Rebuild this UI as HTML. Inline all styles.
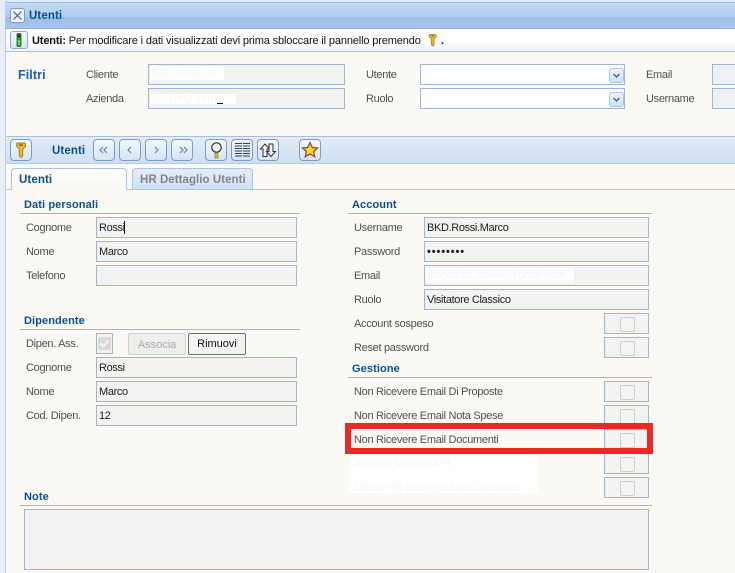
<!DOCTYPE html>
<html><head><meta charset="utf-8"><style>
html,body{margin:0;padding:0}
body{width:735px;height:573px;overflow:hidden;position:relative;background:#faf9f4;font-family:"Liberation Sans",sans-serif;font-size:11px;color:#444}
div,span,svg{position:absolute;box-sizing:border-box}
.l{white-space:nowrap;line-height:14px;height:14px;color:#4f4f4f;letter-spacing:-.3px;margin-top:1px}
.f{background:#f2f2f0;border:1px solid #9fb6d2;color:#222;line-height:21px;padding-left:2px;white-space:nowrap;letter-spacing:-.35px}
.e{background:#edf0f5;border:1px solid #9fb6d2}
.c{background:#fff;border:1px solid #9fb6d2}
.h{font-weight:bold;color:#0b4f8f;white-space:nowrap;line-height:14px;height:14px;font-size:11px;letter-spacing:.1px;margin-top:1px}
.r{height:1px;background:#9fb6d2}
.b{width:22px;height:22px;top:139px;border:1px solid #7f9bbd;border-radius:4px;background:linear-gradient(#f3f8fd,#d5e4f4)}
.cb{left:604px;width:45px;height:21px;background:#f2f2f0;border:1px solid #9fb6d2}
.cb:after{content:"";position:absolute;left:15px;top:3px;width:13px;height:13px;border:1px solid #cfcfcf;border-radius:2px;background:#f4f4f2}
.dd{left:188px;top:3px;width:15px;height:15px;border:1px solid #a9c3e4;border-radius:3px;background:linear-gradient(#eef5fc,#cfe0f3)}
</style></head><body>
<div style="left:0;top:0;width:5px;height:573px;background:#e9edf7"></div>
<div style="left:5px;top:0;width:1px;height:573px;background:#b9cdea"></div>
<div style="left:5px;top:0;width:730px;height:2px;background:#dfe9f6"></div>
<div style="left:5px;top:2px;width:730px;height:27px;border-top:1px solid #9dbde6;border-bottom:1px solid #8fb0dc;background:linear-gradient(#c0d8f4 0,#b2cef0 55%,#9fbde6 56%,#a9c5eb 100%)"></div>
<div style="left:10px;top:8px;width:15px;height:15px;border:1px solid #7f9bbd;border-radius:3px;background:#eff5fc"></div>
<svg style="left:10px;top:8px" width="15" height="15"><path d="M3.500 3.500L11.500 11.500M11.500 3.500L3.500 11.500" stroke="#3f5f95" stroke-width="1.200" fill="none"/></svg>
<div class="h" style="left:29px;top:8px;font-size:11.500px">Utenti</div>

<div style="left:6px;top:29px;width:729px;height:23px;background:linear-gradient(#fff 0,#fff 50%,#edf3fb 100%);border-bottom:1px solid #a9c3e4"></div>
<div style="left:10px;top:31px;width:18px;height:18px;border:1px solid #8fa7c4;border-radius:3px;background:linear-gradient(#f4f8fc,#dbe6f2)"></div>
<svg style="left:10px;top:31px" width="18" height="18"><rect x="7" y="2.500" width="4" height="13" rx="1" fill="#2f9b33" stroke="#1d5c20" stroke-width=".8"/><circle cx="9" cy="5" r="1.500" fill="#1c3d1f"/><rect x="7.800" y="9" width="2.400" height="5" fill="#58e05a"/></svg>
<div class="l" style="left:32px;top:33px;color:#111;letter-spacing:-.14px"><b>Utenti:</b> Per modificare i dati visualizzati devi prima sbloccare il pannello premendo</div>
<svg style="left:428px;top:33px" width="10" height="14"><path d="M1.500 1.500h6l.8 2.200-2.300 2.300v6l-1.500 1-1-1v-6L1 3.500z" fill="#f0b92a" stroke="#a8761a" stroke-width=".8"/><rect x="3.500" y="2.500" width="2.500" height="1" fill="#7a5a14"/></svg>
<div class="l" style="left:441px;top:33px;color:#111;font-weight:bold">.</div>

<div class="h" style="left:18px;top:67px;color:#1a5fb4;font-size:12.500px">Filtri</div>
<div class="l" style="left:86px;top:67px">Cliente</div>
<div class="l" style="left:86px;top:91px">Azienda</div>
<div class="f" style="left:148px;top:64px;width:197px;height:21px"></div>
<div class="f" style="left:148px;top:88px;width:197px;height:21px"></div>
<div style="left:150px;top:66px;width:74px;height:14px;background:#fff;color:#f5f5f5;line-height:14px;padding-left:1px;white-space:nowrap;overflow:hidden">B&amp;D Italia Srl</div>
<div style="left:150px;top:94px;width:86px;height:10px;background:#fff;color:#f5f5f5;line-height:10px;padding-left:1px;white-space:nowrap;overflow:hidden">BD BKD demo</div>
<div style="left:217px;top:103px;width:6px;height:1px;background:#222"></div>
<div class="l" style="left:366px;top:67px">Utente</div>
<div class="l" style="left:366px;top:91px">Ruolo</div>
<div class="c" style="left:420px;top:64px;width:205px;height:21px"><div class="dd"></div><svg style="left:191px;top:6px" width="9" height="9"><path d="M1.500 3L4.500 6L7.500 3" stroke="#2f5f9e" stroke-width="1.300" fill="none"/></svg></div>
<div class="c" style="left:420px;top:88px;width:205px;height:21px"><div class="dd"></div><svg style="left:191px;top:6px" width="9" height="9"><path d="M1.500 3L4.500 6L7.500 3" stroke="#2f5f9e" stroke-width="1.300" fill="none"/></svg></div>
<div class="l" style="left:646px;top:67px">Email</div>
<div class="l" style="left:646px;top:91px">Username</div>
<div class="e" style="left:712px;top:64px;width:30px;height:21px"></div>
<div class="e" style="left:712px;top:88px;width:30px;height:21px"></div>

<div style="left:6px;top:136px;width:729px;height:28px;border-top:1px solid #aac0de;background:linear-gradient(#e3ecf7,#cfdff2);border-bottom:1px solid #b5cbe8"></div>
<div class="b" style="left:10px"></div>
<svg style="left:10px;top:139px" width="22" height="22"><path d="M7 4h8l.8 3-3 3v6.500L11 18.500l-1.800-2V10L6.500 7z" fill="#f2b92a" stroke="#a8701a" stroke-width=".9"/><rect x="9" y="5.500" width="4" height="1.300" fill="#7a5a14"/></svg>
<div class="h" style="left:52px;top:143px;font-size:11.500px">Utenti</div>
<div class="b" style="left:93px"></div><div class="b" style="left:119px"></div><div class="b" style="left:145px"></div><div class="b" style="left:171px"></div>
<svg style="left:93px;top:139px" width="100" height="22" fill="none" stroke="#5f86b8" stroke-width="1.200"><path d="M10 8l-3 3 3 3M14 8l-3 3 3 3M38 8l-3 3 3 3M62 8l3 3-3 3M87 8l3 3-3 3M91 8l3 3-3 3"/></svg>
<div class="b" style="left:205px"></div><div class="b" style="left:231px"></div><div class="b" style="left:257px"></div><div class="b" style="left:299px"></div>
<svg style="left:205px;top:139px" width="22" height="22"><rect x="10" y="13" width="3" height="6" fill="#e8a92a" stroke="#8f6a1c" stroke-width=".6"/><circle cx="11.500" cy="8.500" r="4.700" fill="#eef2f4" stroke="#333" stroke-width="1.200"/></svg>
<svg style="left:231px;top:139px" width="22" height="22" fill="none" stroke="#2f3f55" stroke-width="1"><path d="M4 4.500h7M4 7h7M4 9.500h7M4 12h7M4 14.500h7M4 17h7M12 4.500h7M12 7h7M12 9.500h7M12 12h7M12 14.500h7M12 17h7"/></svg>
<svg style="left:257px;top:139px" width="22" height="22" fill="#eef3f8" stroke="#333" stroke-width="1"><path d="M8 5L3.500 10H6V17.500H10V10h2.500z"/><path d="M14 17.500L18.500 12.500H16V5H12V12.500H9.500z"/></svg>
<svg style="left:299px;top:139px" width="22" height="22"><path d="M11 3.500l2.300 5 5.200.5-3.900 3.500 1.200 5.300-4.800-2.800-4.800 2.800 1.200-5.300L3.500 9l5.200-.5z" fill="#f7dc22" stroke="#a8382a" stroke-width="1.200"/></svg>

<div style="left:6px;top:189px;width:729px;height:1px;background:#a9c3e4"></div>
<div style="left:11px;top:168px;width:116px;height:22px;border:1px solid #a9c3e4;border-bottom:none;border-radius:4px 4px 0 0;background:linear-gradient(#fff,#faf9f4 60%)"></div>
<div class="h" style="left:19px;top:172px;font-size:11.500px">Utenti</div>
<div style="left:132px;top:168px;width:121px;height:21px;border:1px solid #a9c3e4;border-bottom:none;border-radius:4px 4px 0 0;background:linear-gradient(#e6eef9,#cfe0f5)"></div>
<div class="h" style="left:140px;top:172px;color:#858585;font-size:11.500px;letter-spacing:.05px">HR Dettaglio Utenti</div>

<div class="h" style="left:24px;top:197px">Dati personali</div>
<div class="r" style="left:20px;top:213px;width:280px"></div>
<div class="l" style="left:26px;top:220px">Cognome</div>
<div class="l" style="left:26px;top:244px">Nome</div>
<div class="l" style="left:26px;top:268px">Telefono</div>
<div class="f" style="left:96px;top:217px;width:201px;height:21px">Rossi</div>
<div style="left:124px;top:221px;width:1px;height:13px;background:#111"></div>
<div class="f" style="left:96px;top:241px;width:201px;height:21px">Marco</div>
<div class="f" style="left:96px;top:265px;width:201px;height:21px"></div>

<div class="h" style="left:24px;top:313px">Dipendente</div>
<div class="r" style="left:20px;top:329px;width:280px"></div>
<div class="l" style="left:26px;top:336px">Dipen. Ass.</div>
<div style="left:96px;top:333px;width:17px;height:21px;border:1px solid #9fb6d2;background:#f2f2f0"></div>
<div style="left:98px;top:337px;width:13px;height:13px;background:#d9d9d9;border-radius:2px"></div>
<svg style="left:98px;top:337px" width="13" height="13"><path d="M2.500 6.500L5.500 9.500L10.500 3.500" stroke="#f4f4f4" stroke-width="2" fill="none"/></svg>
<div style="left:128px;top:333px;width:58px;height:22px;border:1px solid #d0d0cc;border-radius:2px;background:#eeeeea;color:#aaa;text-align:center;line-height:22px">Associa</div>
<div style="left:188px;top:333px;width:58px;height:22px;border:1px solid #707070;border-radius:2px;background:#f3f3f1;color:#111;text-align:center;line-height:21px">Rimuovi</div>
<div class="l" style="left:26px;top:360px">Cognome</div>
<div class="l" style="left:26px;top:384px">Nome</div>
<div class="l" style="left:26px;top:408px">Cod. Dipen.</div>
<div class="f" style="left:96px;top:357px;width:201px;height:21px">Rossi</div>
<div class="f" style="left:96px;top:381px;width:201px;height:21px">Marco</div>
<div class="f" style="left:96px;top:405px;width:201px;height:21px">12</div>

<div class="h" style="left:352px;top:197px">Account</div>
<div class="r" style="left:348px;top:213px;width:304px"></div>
<div class="l" style="left:354px;top:220px">Username</div>
<div class="l" style="left:354px;top:244px">Password</div>
<div class="l" style="left:354px;top:268px">Email</div>
<div class="l" style="left:354px;top:292px">Ruolo</div>
<div class="f" style="left:424px;top:217px;width:225px;height:21px">BKD.Rossi.Marco</div>
<div class="f" style="left:424px;top:241px;width:225px;height:21px;letter-spacing:.9px;font-weight:bold">••••••••</div>
<div class="f" style="left:424px;top:265px;width:225px;height:21px"></div>
<div style="left:425px;top:268px;width:149px;height:15px;background:#fff;color:#f3f3f3;line-height:15px;padding-left:2px;white-space:nowrap;overflow:hidden;letter-spacing:-.3px">gionathan.arnese@gmail.com</div>
<div class="f" style="left:424px;top:289px;width:225px;height:21px">Visitatore Classico</div>
<div class="l" style="left:354px;top:316px">Account sospeso</div>
<div class="l" style="left:354px;top:340px">Reset password</div>
<div class="cb" style="top:313px"></div>
<div class="cb" style="top:337px"></div>

<div class="h" style="left:352px;top:361px">Gestione</div>
<div class="r" style="left:348px;top:377px;width:304px"></div>
<div class="l" style="left:354px;top:384px">Non Ricevere Email Di Proposte</div>
<div class="l" style="left:354px;top:408px">Non Ricevere Email Nota Spese</div>
<div class="l" style="left:354px;top:432px">Non Ricevere Email Documenti</div>
<div class="cb" style="top:381px"></div>
<div class="cb" style="top:405px"></div>
<div class="cb" style="top:429px"></div>
<div class="cb" style="top:453px"></div>
<div class="cb" style="top:477px"></div>
<div style="left:349px;top:455px;width:189px;height:38px;background:#fff"></div>
<div class="l" style="left:354px;top:456px;color:#f5f5f5">Account solo per API</div>
<div class="l" style="left:354px;top:480px;color:#f5f5f5">Utente HR che vede tutti i Candidati</div>
<div style="left:345px;top:423px;width:308px;height:31px;border:6px solid #ec2727"></div>

<div class="h" style="left:24px;top:489px">Note</div>
<div class="r" style="left:20px;top:505px;width:632px"></div>
<div class="f" style="left:24px;top:509px;width:625px;height:61px"></div>
</body></html>
